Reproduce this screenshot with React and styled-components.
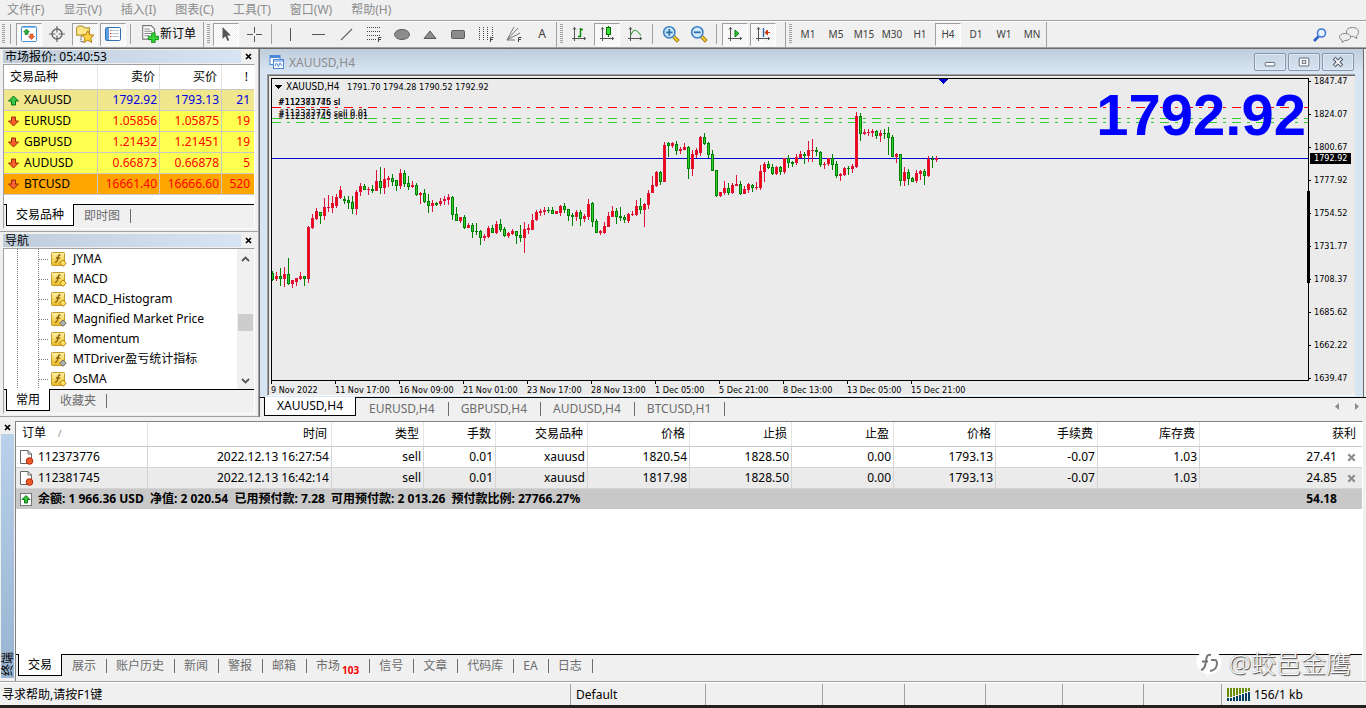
import styled, { createGlobalStyle, css } from "styled-components";

const GlobalStyle = createGlobalStyle`
  * {
    box-sizing: border-box;
  }
  body {
    margin: 0;
    background: #f0f0f0;
    color: #000;
    font-family: "Noto Sans", "Noto Sans CJK SC", sans-serif;
    font-size: 12px;
    line-height: 16px;
  }
  button {
    font: inherit;
    color: inherit;
    background: none;
    border: none;
    padding: 0;
  }
  ul {
    list-style: none;
    margin: 0;
    padding: 0;
  }
`;

const chartFont = css`
  font-family: "DejaVu Sans Condensed", "DejaVu Sans", sans-serif;
  font-size: 9px;
`;

const Container = styled.div`
  min-height: 100vh;
  display: flex;
  flex-direction: column;
`;

/* menu */

const MenuBar = styled.nav`
  display: flex;
  gap: 19px;
  height: 21px;
  padding: 2px 7px;
  border-bottom: 1px solid #a0a0a0;
`;
const MenuItem = styled.button`
  color: #8c8c8c;
  white-space: nowrap;
`;

/* toolbar */

const Toolbar = styled.div`
  display: flex;
  height: 28px;
  border-top: 1px solid #fff;
  border-bottom: 1px solid #696969;
  box-shadow: inset 0 -1px #a0a0a0;
`;
const ToolGroup = styled.div`
  display: flex;
  align-items: center;
  gap: 2px;
  padding: 0 ${(p) => p.$end || 1}px 2px ${(p) => (p.$first ? 2 : 3)}px;
  border-right: 1px solid #a0a0a0;
`;
const Grip = styled.span`
  width: 3px;
  height: 20px;
  margin-right: 1px;
  background: repeating-linear-gradient(#a0a0a0 0 1px, transparent 1px 2px);
`;
const ToolDivider = styled.span`
  width: 1px;
  height: 20px;
  margin: 0 3px 0 2px;
  background: #a0a0a0;
`;
const ToolButton = styled.button`
  display: flex;
  align-items: center;
  justify-content: center;
  gap: 1px;
  width: ${(p) => (p.$wide ? "auto" : "26px")};
  height: 23px;
  padding: ${(p) => (p.$wide ? "0 1px 0 4px" : "0")};
  border: 1px solid transparent;
  color: ${(p) => (p.$wide ? "#000" : "#404040")};
  font-size: ${(p) => (p.$wide || p.$large ? 12 : 10)}px;
  white-space: nowrap;
  ${(p) =>
    p.$active &&
    css`
      border-color: #a0a0a0 #fff #fff #a0a0a0;
      background: repeating-conic-gradient(#fff 0 25%, #f0f0f0 0 50%) 0 0 / 2px
        2px;
    `}
`;
const ToolEnd = styled.div`
  display: flex;
  align-items: center;
  gap: 10px;
  margin-left: auto;
  padding-right: 6px;
`;

/* docked panels */

const Workspace = styled.div`
  display: flex;
`;
const Dock = styled.aside`
  flex: none;
  width: 259px;
  border-right: 1px solid #a0a0a0;
`;
const Panel = styled.section`
  padding: ${(p) => p.$top}px 3px 2px;
  border-bottom: 1px solid #a0a0a0;
`;
const PanelHead = styled.header`
  display: flex;
  align-items: center;
  gap: 1px;
  height: 13px;
  margin-bottom: 1px;
`;
const PanelTitle = styled.h2`
  flex: 1;
  margin: 0;
  padding-left: 2px;
  font-size: 12px;
  font-weight: 400;
  line-height: 13px;
  background: linear-gradient(90deg, #bfcddb, #d7e4f2);
`;
const CloseButton = styled.button`
  display: flex;
  align-items: center;
  justify-content: center;
  width: ${(p) => p.$width || 13}px;
  height: 13px;
`;
const PanelBody = styled.div`
  border: 1px solid;
  border-color: #a0a0a0 #fff #fff #a0a0a0;
`;
const White = styled.div`
  background: #fff;
  padding-bottom: 9px;
`;

const Tabs = styled.div`
  display: flex;
  align-items: flex-start;
  height: ${(p) => p.$height || 24}px;
  padding-left: ${(p) => p.$lead || 2}px;
  border-top: 1px solid #000;
`;
const Tab = styled.button`
  display: flex;
  align-items: center;
  height: 14px;
  margin-top: 4px;
  padding: 0 ${(p) => p.$pad || 10}px 0 ${(p) => (p.$pad || 10) - 1}px;
  border-right: 1px solid #6d6d6d;
  color: #6d6d6d;
  white-space: nowrap;
  ${(p) =>
    p.$active &&
    css`
      height: ${p.$tall || 22}px;
      margin: -1px 1px 0 0;
      padding: 0 ${(p.$pad || 10) - 1}px;
      border: 1px solid #000;
      border-top: none;
      background: #fff;
      color: #000;
    `}
`;
const TabCount = styled.span`
  align-self: flex-end;
  margin: 0 0 -3px 2px;
  color: #f00000;
  font-size: 10px;
  font-weight: 700;
  line-height: 12px;
`;

/* market watch */

const WatchTable = styled.table`
  width: 100%;
  table-layout: fixed;
  border-collapse: separate;
  border-spacing: 0;
`;
const WatchHead = styled.th`
  height: 25px;
  padding: 0 4px 1px 6px;
  border-right: 1px solid #e5e5e5;
  border-bottom: 1px solid #c8c8c8;
  font-weight: 400;
  text-align: ${(p) => (p.$left ? "left" : "right")};
  &:last-child {
    padding-right: 6px;
    border-right: none;
  }
`;
const WatchRow = styled.tr`
  background: ${(p) => p.$bg};
  color: ${(p) => p.$color};
`;
const WatchCell = styled.td`
  height: 21px;
  padding: 0 2px 0 0;
  border-right: 1px solid #c8c8c8;
  border-bottom: 1px solid #c8c8c8;
  text-align: right;
  &:last-child {
    padding-right: 4px;
    border-right: none;
  }
`;
const Symbol = styled.div`
  display: flex;
  align-items: center;
  gap: 5px;
  padding-left: 4px;
  color: #000;
`;

/* navigator */

const TreeBox = styled.div`
  display: flex;
  background: #fff;
`;
const Tree = styled.ul`
  flex: 1;
`;
const TreeItem = styled.li`
  display: flex;
  align-items: center;
  height: 20px;
  padding-left: 13px;
  line-height: 18px;
  white-space: nowrap;
`;
const TreeLine = styled.span`
  width: ${(p) => p.$width}px;
  height: 20px;
  background: repeating-linear-gradient(#808080 0 1px, transparent 1px 2px) 0 0 /
    1px 100% no-repeat;
`;
const TreeDash = styled.span`
  width: 10px;
  height: 1px;
  margin-right: 2px;
  background: repeating-linear-gradient(
    90deg,
    #808080 0 1px,
    transparent 1px 2px
  );
`;
const TreeName = styled.span`
  margin-left: 6px;
`;
const ScrollBar = styled.div`
  display: flex;
  flex-direction: column;
  align-items: center;
  justify-content: space-between;
  width: 17px;
  padding: 7px 1px 5px 0;
  background: #f0f0f0;
`;
const Thumb = styled.span`
  width: 15px;
  height: 17px;
  margin-top: 4px;
  background: #cdcdcd;
`;

/* chart window */

const Mdi = styled.main`
  flex: 1;
  min-width: 0;
  display: flex;
  flex-direction: column;
  border-left: 1px solid #696969;
`;
const ChartWindow = styled.section`
  margin-right: 2px;
  padding: 0 8px 1px 7px;
  border-right: 1px solid #696969;
  background: linear-gradient(#bfcddb, #d7e4f2 22px);
`;
const WindowHead = styled.header`
  display: flex;
  align-items: center;
  gap: 2px;
  height: 25px;
  padding: 0 1px 0 2px;
`;
const WindowTitle = styled.h1`
  flex: 1;
  margin: 2px 0 0 2px;
  color: #8c8c8c;
  font-size: 12px;
  font-weight: 400;
  line-height: 16px;
`;
const WindowButton = styled.button`
  display: flex;
  align-items: center;
  justify-content: center;
  width: 32px;
  height: 18px;
  border: 1px solid #8593ad;
  border-radius: 2px;
  background: linear-gradient(#c9d6e4, #d5e2f0);
  box-shadow: inset 0 0 0 1px #e2ebf5;
`;
const ChartFrame = styled.div`
  border-top: 1px solid #a0a0a0;
  border-left: 1px solid #a0a0a0;
  border-bottom: 1px solid #fff;
  box-shadow: inset 1px 1px #696969;
  background: #ebebeb;
  padding: 3px 0 0 3px;
`;
const ChartRow = styled.div`
  display: flex;
`;
const Plot = styled.svg`
  flex: 1;
  min-width: 0;
  height: 303px;
  border: 1px solid #000;
  display: block;
`;
const PlotText = styled.text`
  ${chartFont}
`;
const PlotName = styled(PlotText)`
  font-size: 10px;
`;
const BigPrice = styled.text`
  font-family: "Liberation Sans", Arial, sans-serif;
  font-size: 58px;
  font-weight: 700;
  fill: #0000ff;
  text-anchor: end;
`;
const PriceAxis = styled.div`
  ${chartFont}
  position: relative;
  display: flex;
  flex-direction: column;
  gap: 23px;
  width: 46px;
  margin: -2px 0;
  line-height: 10px;
`;
const PriceLabel = styled.span`
  display: flex;
  align-items: center;
  gap: 3px;
  &::before {
    content: "";
    width: 2px;
    height: 1px;
    background: #000;
  }
`;
const PriceNow = styled.span`
  position: absolute;
  top: 77px;
  left: 1px;
  width: 41px;
  padding-left: 4px;
  line-height: 11px;
  background: #000;
  color: #fff;
`;
const RangeMark = styled.span`
  position: absolute;
  top: 115px;
  left: -2px;
  width: 3px;
  height: 92px;
  background: #000;
`;
const TimeAxis = styled.div`
  ${chartFont}
  display: flex;
  height: 14px;
  line-height: 12px;
  overflow: hidden;
`;
const TimeLabel = styled.span`
  flex: none;
  width: 64px;
  padding-top: 3px;
  white-space: nowrap;
  background: linear-gradient(#000, #000) 0 0 / 1px 3px no-repeat;
`;
const TabSpacer = styled.span`
  flex: 1;
`;
const Arrow = styled.button`
  display: flex;
  width: 19px;
  height: 16px;
  align-items: center;
  justify-content: center;
`;

/* terminal */

const Terminal = styled.section`
  flex: 1;
  display: flex;
  margin-top: 4px;
`;
const Strip = styled.div`
  display: flex;
  flex-direction: column;
  width: 15px;
  padding: 0 1px 3px 1px;
`;
const StripTitle = styled.div`
  flex: 1;
  display: flex;
  align-items: flex-start;
  padding-top: 2px;
  background: linear-gradient(#98b4d1, #b9d1ea);
  line-height: 13px;
  writing-mode: vertical-rl;
  text-orientation: sideways;
  transform: rotate(180deg);
`;
const TerminalBody = styled.div`
  flex: 1;
  min-width: 0;
  display: flex;
  flex-direction: column;
  margin-right: 3px;
  border-top: 1px solid #828282;
  border-left: 1px solid #828282;
  border-right: 1px solid #fff;
`;
const TerminalSheet = styled.div`
  flex: 1;
  background: #fff;
`;
const OrderTable = styled.table`
  width: 100%;
  table-layout: fixed;
  border-collapse: separate;
  border-spacing: 0;
`;
const OrderHead = styled.th`
  height: 25px;
  padding: 0 4px 1px 6px;
  border-right: 1px solid #e5e5e5;
  border-bottom: 1px solid #c8c8c8;
  font-weight: 400;
  text-align: right;
  &:first-child {
    text-align: left;
  }
  &:last-child {
    padding-right: 6px;
    border-right: none;
  }
`;
const SortMark = styled.span`
  margin-left: 12px;
  color: #808080;
  font-size: 9px;
`;
const OrderRow = styled.tr`
  background: ${(p) => (p.$alt ? "#ebebeb" : "#fff")};
`;
const OrderCell = styled.td`
  height: 21px;
  padding: 0 2px 0 3px;
  border-right: 1px solid #d4d4d4;
  border-bottom: 1px solid #d4d4d4;
  text-align: right;
  &:last-child {
    padding-right: 6px;
    border-right: none;
  }
`;
const Inline = styled.div`
  display: flex;
  align-items: center;
  justify-content: ${(p) => (p.$end ? "flex-end" : "flex-start")};
  gap: ${(p) => (p.$end ? 9 : 4)}px;
`;
const TotalRow = styled.tr`
  height: 20px;
  background: #c8c8c8;
  font-weight: 700;
`;
const TotalCell = styled.td`
  padding: 0 25px 0 3px;
  white-space: pre;
  text-align: ${(p) => (p.$end ? "right" : "left")};
`;

/* status bar */

const StatusBar = styled.footer`
  display: flex;
  height: 27px;
  padding-top: 2px;
  border-top: 1px solid #a0a0a0;
  border-bottom: 3px solid #23211f;
  box-shadow: inset 0 1px #fff;
`;
const StatusCell = styled.div`
  display: flex;
  align-items: center;
  gap: 4px;
  width: ${(p) => p.$width}px;
  flex: ${(p) => (p.$grow ? 1 : "none")};
  padding-left: ${(p) => (p.$grow ? 2 : 5)}px;
  border-left: ${(p) => (p.$grow ? "none" : "1px solid #a0a0a0")};
`;
const Watermark = styled.div`
  position: absolute;
  right: 15px;
  bottom: 29px;
  display: flex;
  align-items: center;
  gap: 6px;
  color: #fff;
  font-size: 25px;
  font-weight: 300;
  line-height: 32px;
  text-shadow: 1px 1px 1px #444, 0 0 1px #888;
`;

/* icons */

const Icon = ({ size = 16, children, ...rest }) => (
  <svg width={size} height={size} viewBox="0 0 16 16" fill="none" {...rest}>
    {children}
  </svg>
);

const Cross = ({ color = "#000", size = 7 }) => (
  <svg width={size} height={size} viewBox="0 0 7 7">
    <path d="M1 1l5 5M6 1L1 6" stroke={color} strokeWidth="1.7" />
  </svg>
);

const ArrowIcon = ({ up }) => (
  <svg width="11" height="11" viewBox="0 0 11 11">
    <path
      d={
        up
          ? "M5.5 1L10.5 6H7.5V10H3.5V6H.5Z"
          : "M5.5 10L.5 5H3.5V1H7.5V5H10.5Z"
      }
      fill={up ? "#35c945" : "#f8602c"}
      stroke={up ? "#0c6f1b" : "#96290a"}
    />
  </svg>
);

const FnIcon = ({ gray }) => (
  <svg width="16" height="16" viewBox="0 0 16 16">
    <defs>
      <linearGradient id="fn" x2="0" y2="1">
        <stop offset="0" stopColor="#fff3a8" />
        <stop offset="1" stopColor="#e6b822" />
      </linearGradient>
    </defs>
    <rect x=".5" y="1.5" width="13" height="13" rx="1" fill="url(#fn)" stroke="#c39a2b" />
    <path
      d="M9.5 4.2C7.7 3.5 7.2 5 7 6.5C6.7 9 6.5 11.5 4 11.3M5 7H9"
      fill="none"
      stroke="#8a5f0a"
      strokeWidth="1.3"
    />
    <path
      d="M12 9L15.2 12.2L12 15.4L8.8 12.2Z"
      fill={gray ? "#b0b0b0" : "#ffe169"}
      stroke={gray ? "#6c6c6c" : "#b98507"}
    />
  </svg>
);

const OrderIcon = () => (
  <svg width="15" height="16" viewBox="0 0 15 16">
    <path d="M1.5 1.5H9L12.5 5V14.5H1.5Z" fill="#fff" stroke="#666" />
    <path d="M9 1.5V5H12.5" fill="none" stroke="#666" />
    <circle cx="10.5" cy="12" r="3.3" fill="#f05a28" stroke="#b02a0a" />
  </svg>
);

const BalanceIcon = () => (
  <svg width="15" height="15" viewBox="0 0 15 15">
    <rect x="1.5" y="1.5" width="11" height="12" fill="#fff" stroke="#777" />
    <path d="M7 3.5L11 7.5H8.5V11H5.5V7.5H3Z" fill="#35c435" stroke="#0f7a1c" />
  </svg>
);

const Axes = ({ children }) => (
  <Icon>
    <path d="M3.5 1V15M1 12.5H15M2 3.5L3.5 1.5L5 3.5M12.8 11L14.8 12.5L12.8 14" stroke="#555" />
    {children}
  </Icon>
);

const Magnifier = ({ plus }) => (
  <Icon size={18}>
    <path d="M10.5 10.5L14.5 14.5" stroke="#a77a10" strokeWidth="3.4" />
    <path d="M10.5 10.5L14 14" stroke="#f3cf35" strokeWidth="1.6" />
    <circle cx="6.5" cy="6.5" r="5" fill="#cfeaff" stroke="#3c7fc4" strokeWidth="1.4" />
    <path d={plus ? "M3.5 6.5H9.5M6.5 3.5V9.5" : "M3.5 6.5H9.5"} stroke="#2c70a8" strokeWidth="1.6" />
  </Icon>
);

const icons = {
  watch: (
    <Icon>
      <rect x=".5" y=".5" width="15" height="15" rx="1" fill="#fff" stroke="#4a90d9" />
      <path d="M1 1.5H15" stroke="#8fc0f0" />
      <path d="M5.5 3L8.5 6H7V8.5H4V6H2.5Z" fill="#2fae3a" stroke="#17762a" strokeWidth=".6" />
      <path d="M10.5 13.5L7.5 10.5H9V8H12V10.5H13.5Z" fill="#f26a35" stroke="#b73a12" strokeWidth=".6" />
    </Icon>
  ),
  target: (
    <Icon>
      <circle cx="8" cy="8" r="5" stroke="#666" strokeWidth="1.4" />
      <path d="M8 0V6.5M8 9.5V16M0 8H6.5M9.5 8H16" stroke="#666" strokeWidth="1.2" />
    </Icon>
  ),
  favorites: (
    <Icon size={18}>
      <path d="M.5 2.5L2 1H6L7.5 2.5H12V9H.5Z" fill="#ffe88a" stroke="#b9973a" />
      <path d="M4.5 10V15H7" stroke="#444" strokeDasharray="1 1" />
      <path
        d="M10.5 5L12.2 8.6L16 9L13.2 11.6L14 15.5L10.5 13.6L7 15.5L7.8 11.6L5 9L8.8 8.6Z"
        fill="#ffcf3f"
        stroke="#a97610"
        strokeWidth=".8"
      />
    </Icon>
  ),
  terminal: (
    <Icon>
      <rect x=".5" y="1.5" width="15" height="13" rx="1" fill="#fff" stroke="#2f6fb5" />
      <rect x="1" y="2" width="3" height="12" fill="#5d9ee0" />
      <path d="M6 4.5H14M6 7.5H14M6 10.5H14" stroke="#b9c4d0" />
      <path d="M5 4.5h1M5 7.5h1M5 10.5h1" stroke="#d22" />
    </Icon>
  ),
  order: (
    <Icon size={18}>
      <path d="M1.5.5H9L12 3.5V12.5H1.5Z" fill="#fff" stroke="#777" />
      <path d="M3 3.5H8M3 5.5H10M3 7.5H10M3 9.5H7" stroke="#888" />
      <path d="M9.5 7h3v3h3v3h-3v3h-3v-3h-3v-3h3Z" fill="#35d435" stroke="#0d8a1c" strokeWidth=".8" />
    </Icon>
  ),
  cursor: (
    <Icon>
      <path d="M4.5 1V13L7.3 10.3L9.5 15L11.3 14.2L9.2 9.6H13Z" fill="#555" />
    </Icon>
  ),
  crosshair: (
    <Icon>
      <path d="M8.5 1V7M8.5 10V16M1 8.5H7M10 8.5H16" stroke="#555" />
    </Icon>
  ),
  vline: (
    <Icon>
      <path d="M8.5 2V15" stroke="#555" />
    </Icon>
  ),
  hline: (
    <Icon>
      <path d="M2 8.5H15" stroke="#555" />
    </Icon>
  ),
  trend: (
    <Icon>
      <path d="M3 14L14 3" stroke="#666" strokeWidth="1.2" />
    </Icon>
  ),
  fibo: (
    <Icon>
      <path d="M1 1.5H15M1 5.5H15M1 9.5H15M1 13.5H10" stroke="#444" strokeDasharray="1 1" />
      <path d="M12.5 16V11.5H15.5M12.5 13.5H15" stroke="#444" />
    </Icon>
  ),
  ellipse: (
    <Icon>
      <ellipse cx="8" cy="8.5" rx="7.5" ry="5" fill="#8c8c8c" stroke="#5a5a5a" />
    </Icon>
  ),
  triangle: (
    <Icon>
      <path d="M8 5L14 12.5H2Z" fill="#8c8c8c" stroke="#5a5a5a" />
    </Icon>
  ),
  rect: (
    <Icon>
      <rect x="1.5" y="4.5" width="13" height="8" rx="1" fill="#8c8c8c" stroke="#5a5a5a" />
    </Icon>
  ),
  cycles: (
    <Icon>
      <path d="M1.5 1V15M5.5 1V15M9.5 1V15M14.5 1V10" stroke="#444" strokeDasharray="1 1" />
      <path d="M12.5 16V11.5H15.5M12.5 13.5H15" stroke="#444" />
    </Icon>
  ),
  fan: (
    <Icon>
      <path d="M1 14L8 1M1 14L12 2M1 14L14 7M1 14H9" stroke="#777" />
      <path d="M12.5 16V11.5H15.5M12.5 13.5H15" stroke="#444" />
    </Icon>
  ),
  bars: (
    <Axes>
      <path d="M9.5 2V11M9.5 3.5H12M7 10.5H9.5" stroke="#008a00" strokeWidth="1.4" />
    </Axes>
  ),
  candles: (
    <Axes>
      <path d="M9.5 0V11" stroke="#007000" />
      <rect x="7.5" y="1.5" width="4" height="7" fill="#3bdc3b" stroke="#007000" />
    </Axes>
  ),
  line: (
    <Axes>
      <path d="M3.5 9.5C7 2 9 3 14 9.5" stroke="#3a9d3a" strokeWidth="1.2" />
    </Axes>
  ),
  scroll: (
    <Axes>
      <path d="M8 4L12 7.5L8 11Z" fill="#2fc42f" stroke="#007d10" />
    </Axes>
  ),
  shift: (
    <Axes>
      <path d="M8.5 2V11" stroke="#2468a8" strokeWidth="1.4" />
      <path d="M15 6.5H11M12.5 4L10 6.5L12.5 9Z" fill="#c43a10" stroke="#c43a10" />
    </Axes>
  ),
};

const tools = {
  view: ["watch", "target", "favorites", "terminal"],
  draw: ["vline", "hline", "trend", "fibo", "ellipse", "triangle", "rect", "cycles", "fan"],
  type: ["bars", "candles", "line"],
};
const pressed = ["watch", "favorites", "terminal", "cursor", "candles", "scroll", "shift"];

const Tool = ({ name }) => (
  <ToolButton $active={pressed.includes(name)} aria-label={name}>
    {icons[name]}
  </ToolButton>
);

/* data */

const menu = ["文件(F)", "显示(V)", "插入(I)", "图表(C)", "工具(T)", "窗口(W)", "帮助(H)"];
const periods = ["M1", "M5", "M15", "M30", "H1", "H4", "D1", "W1", "MN"];

const quotes = [
  { symbol: "XAUUSD", bid: "1792.92", ask: "1793.13", spread: 21, up: true, bg: "#f0e68c", color: "#0000e0" },
  { symbol: "EURUSD", bid: "1.05856", ask: "1.05875", spread: 19, bg: "#ffff50", color: "#ff0000" },
  { symbol: "GBPUSD", bid: "1.21432", ask: "1.21451", spread: 19, bg: "#ffff50", color: "#ff0000" },
  { symbol: "AUDUSD", bid: "0.66873", ask: "0.66878", spread: 5, bg: "#ffff50", color: "#ff0000" },
  { symbol: "BTCUSD", bid: "16661.40", ask: "16666.60", spread: 520, bg: "#ffa500", color: "#ff0000" },
];

const indicators = [
  { name: "JYMA" },
  { name: "MACD" },
  { name: "MACD_Histogram" },
  { name: "Magnified Market Price", gray: true },
  { name: "Momentum" },
  { name: "MTDriver盈亏统计指标", gray: true },
  { name: "OsMA" },
];

const prices = ["1847.47", "1824.07", "1800.67", "1777.92", "1754.52", "1731.77", "1708.37", "1685.62", "1662.22", "1639.47"];
const times = [
  "9 Nov 2022",
  "11 Nov 17:00",
  "16 Nov 09:00",
  "21 Nov 01:00",
  "23 Nov 17:00",
  "28 Nov 13:00",
  "1 Dec 05:00",
  "5 Dec 21:00",
  "8 Dec 13:00",
  "13 Dec 05:00",
  "15 Dec 21:00",
];

// high, body top, body bottom, low (px from the top of the plot), r = rise, g = fall
const candles = `
192 194 201 202 g,193 197 200 202 r,189 197 200 207 g,188 195 200 208 r,179 195 205 206 g,201 201 205 209 r,
199 199 203 207 r,193 197 200 201 r,197 197 200 207 g,147 148 200 204 r,135 139 149 150 r,129 132 140 141 r,
133 133 137 145 g,119 128 137 141 r,116 128 129 133 r,117 124 129 134 r,115 118 127 129 r,107 111 119 120 r,
117 120 122 125 g,117 121 124 130 g,117 123 130 135 g,111 113 130 136 r,104 107 113 117 r,105 107 111 111 g,
108 110 111 116 r,106 110 112 114 g,91 102 112 112 r,88 102 109 115 g,89 100 109 115 r,97 99 101 108 r,
95 99 103 107 g,101 101 107 112 g,90 94 107 110 r,91 94 105 108 g,97 104 108 111 g,102 106 108 109 r,
104 106 116 117 g,113 114 116 125 r,110 114 123 124 g,115 122 127 134 g,121 124 127 133 r,123 124 126 127 g,
119 122 125 127 r,117 120 122 126 r,115 118 121 126 r,117 118 136 141 g,128 135 142 142 g,138 138 142 144 r,
136 138 149 150 g,144 146 149 149 r,144 146 153 159 g,144 152 153 156 g,151 152 159 166 g,155 157 159 162 r,
147 149 158 159 r,146 149 154 154 g,142 145 154 155 r,140 145 151 153 g,148 150 157 158 g,153 154 157 159 r,
150 152 155 156 r,152 152 157 165 g,146 156 159 163 g,143 150 159 174 r,145 149 151 155 r,135 141 151 151 r,
131 133 141 142 r,130 132 134 137 r,128 131 133 136 r,128 131 132 134 g,128 131 135 135 g,132 132 135 135 r,
126 127 134 137 r,124 127 131 134 g,130 130 137 142 g,134 136 138 147 g,131 133 138 142 r,131 133 140 147 g,
135 137 140 143 r,120 125 138 141 r,123 124 143 148 g,140 142 154 154 g,151 152 154 156 r,143 147 154 155 r,
133 137 148 148 r,127 132 138 138 r,129 132 138 145 g,128 137 139 142 g,136 138 141 144 g,134 135 142 144 r,
132 135 136 137 r,121 127 136 137 r,119 127 131 135 g,124 125 131 148 r,111 114 126 130 r,97 106 114 114 r,
92 93 107 108 r,92 93 103 106 g,63 66 103 103 r,63 64 67 78 g,63 64 67 69 r,62 65 72 76 g,
68 70 72 75 r,64 68 71 71 r,67 68 90 100 g,71 75 90 97 r,69 71 76 79 r,57 58 74 77 r,
54 58 65 66 g,63 64 76 79 g,71 75 92 92 g,91 91 117 118 g,113 113 117 118 r,102 109 114 116 r,
104 109 114 116 g,104 106 114 115 r,96 105 107 107 r,102 105 115 116 g,107 110 115 115 r,104 105 111 114 r,
105 106 109 113 g,103 108 109 111 r,86 92 109 111 r,83 85 93 103 r,82 85 89 90 g,85 88 95 96 g,
87 88 95 96 r,87 88 93 96 g,79 79 93 95 r,76 79 84 89 g,82 83 85 88 g,75 78 84 86 r,
72 75 79 79 r,73 75 77 85 g,62 71 77 83 r,60 71 72 83 r,68 71 73 77 g,72 73 86 88 g,
83 85 86 90 r,79 79 85 87 r,75 79 86 91 g,82 85 97 99 g,94 95 97 102 r,88 89 96 97 r,
87 89 90 96 g,85 87 90 94 r,33 37 88 89 r,34 37 55 62 g,50 53 55 56 r,50 53 54 57 r,
50 52 54 58 r,51 52 57 60 g,51 54 57 63 r,50 54 55 60 g,48 54 59 76 g,56 58 78 78 g,
74 75 78 84 r,75 75 102 107 g,88 93 102 107 r,90 93 100 106 g,98 99 103 103 g,91 94 102 104 r,
91 92 95 101 r,90 92 97 106 g,77 80 97 98 r,77 80 81 89 g,77 79 81 83 r
`
  .trim()
  .split(",")
  .map((c) => {
    const [high, top, bottom, low, dir] = c.trim().split(" ");
    return { high: +high, top: +top, bottom: +bottom, low: +low, rise: dir === "r" };
  });

const levels = [
  { y: 28, color: "#ff0000" },
  { y: 39, color: "#32cd32" },
  { y: 43, color: "#32cd32" },
];

const chartTabs = ["XAUUSD,H4", "EURUSD,H4", "GBPUSD,H4", "AUDUSD,H4", "BTCUSD,H1"];

const columns = ["时间", "类型", "手数", "交易品种", "价格", "止损", "止盈", "价格", "手续费", "库存费", "获利"];
const widths = [132, 184, 92, 72, 92, 102, 102, 102, 102, 102, 102];
const orders = [
  {
    id: "112373776",
    cells: ["2022.12.13 16:27:54", "sell", "0.01", "xauusd", "1820.54", "1828.50", "0.00", "1793.13", "-0.07", "1.03"],
    profit: "27.41",
  },
  {
    id: "112381745",
    cells: ["2022.12.13 16:42:14", "sell", "0.01", "xauusd", "1817.98", "1828.50", "0.00", "1793.13", "-0.07", "1.03"],
    profit: "24.85",
  },
];
const total =
  "余额: 1 966.36 USD  净值: 2 020.54  已用预付款: 7.28  可用预付款: 2 013.26  预付款比例: 27766.27%";

const terminalTabs = ["交易", "展示", "账户历史", "新闻", "警报", "邮箱", "市场", "信号", "文章", "代码库", "EA", "日志"];

const Candle = ({ x, high, top, bottom, low, rise }) => {
  const edge = rise ? "#dc143c" : "#008000";
  const h = Math.max(bottom - top, 1);
  return (
    <g>
      <rect x={x} y={high} width="1" height={Math.max(low - high, 1)} fill={edge} />
      <rect x={x - 1} y={top} width="3" height={h} fill={edge} />
      {h > 2 && <rect x={x} y={top + 1} width="1" height={h - 2} fill={rise ? "#ff0000" : "#32cd32"} />}
    </g>
  );
};

const Chart = () => (
  <Plot shapeRendering="crispEdges">
    {levels.map((l) => (
      <line key={l.y} x1="0" x2="100%" y1={l.y + 0.5} y2={l.y + 0.5} stroke={l.color} strokeDasharray="9 6 3 6" />
    ))}
    <line x1="0" x2="100%" y1="79.5" y2="79.5" stroke="#0000cd" />
    {candles.map((c, i) => (
      <Candle key={i} x={i * 4} {...c} />
    ))}
    <path d="M667 0H676L671.5 5Z" fill="#0000cd" />
    <path d="M3 6H10L6.5 10Z" />
    <PlotName x="14" y="11">
      XAUUSD,H4
    </PlotName>
    <PlotText x="75" y="11">
      1791.70 1794.28 1790.52 1792.92
    </PlotText>
    <PlotText x="6" y="26">#112373776 sl</PlotText>
    <PlotText x="6" y="26">#112381745 sl</PlotText>
    <PlotText x="6" y="37">#112373776 sell 0.01</PlotText>
    <PlotText x="6" y="40">#112381745 sell 0.01</PlotText>
    <BigPrice x="100%" dx="-2" y="56">
      1792.92
    </BigPrice>
  </Plot>
);

const MarketWatch = () => (
  <Panel $top={1}>
    <PanelHead>
      <PanelTitle>市场报价: 05:40:53</PanelTitle>
      <CloseButton aria-label="关闭">
        <Cross />
      </CloseButton>
    </PanelHead>
    <PanelBody>
      <White>
        <WatchTable>
          <colgroup>
            <col width="94" />
            <col width="62" />
            <col width="62" />
            <col />
          </colgroup>
          <thead>
            <tr>
              <WatchHead $left>交易品种</WatchHead>
              <WatchHead>卖价</WatchHead>
              <WatchHead>买价</WatchHead>
              <WatchHead>!</WatchHead>
            </tr>
          </thead>
          <tbody>
            {quotes.map((q) => (
              <WatchRow key={q.symbol} $bg={q.bg} $color={q.color}>
                <WatchCell>
                  <Symbol>
                    <ArrowIcon up={q.up} />
                    {q.symbol}
                  </Symbol>
                </WatchCell>
                <WatchCell>{q.bid}</WatchCell>
                <WatchCell>{q.ask}</WatchCell>
                <WatchCell>{q.spread}</WatchCell>
              </WatchRow>
            ))}
          </tbody>
        </WatchTable>
      </White>
      <Tabs>
        <Tab $active>交易品种</Tab>
        <Tab>即时图</Tab>
      </Tabs>
    </PanelBody>
  </Panel>
);

const Navigator = () => (
  <Panel $top={2}>
    <PanelHead>
      <PanelTitle>导航</PanelTitle>
      <CloseButton aria-label="关闭">
        <Cross />
      </CloseButton>
    </PanelHead>
    <PanelBody>
      <TreeBox>
        <Tree>
          {indicators.map((item) => (
            <TreeItem key={item.name}>
              <TreeLine $width={21} />
              <TreeLine $width={1} />
              <TreeDash />
              <FnIcon gray={item.gray} />
              <TreeName>{item.name}</TreeName>
            </TreeItem>
          ))}
        </Tree>
        <ScrollBar>
          <svg width="9" height="6">
            <path d="M1 5L4.5 1.5L8 5" fill="none" stroke="#555" strokeWidth="1.8" />
          </svg>
          <Thumb />
          <svg width="9" height="6">
            <path d="M1 1L4.5 4.5L8 1" fill="none" stroke="#555" strokeWidth="1.8" />
          </svg>
        </ScrollBar>
      </TreeBox>
      <Tabs>
        <Tab $active>常用</Tab>
        <Tab>收藏夹</Tab>
      </Tabs>
    </PanelBody>
  </Panel>
);

const ChartArea = () => (
  <Mdi>
    <ChartWindow>
      <WindowHead>
        <Icon>
          <rect x="1" y="1.5" width="10" height="9" fill="#fff" stroke="#4a86d8" />
          <path d="M1 3H11" stroke="#4a86d8" strokeWidth="2" />
          <rect x="4.5" y="5.5" width="10" height="9" fill="#fff" stroke="#4a86d8" />
          <path d="M4.5 7H14.5" stroke="#4a86d8" />
          <path d="M6 12L7.5 9L9.5 12.5L11 9L13 12" stroke="#4a86d8" />
        </Icon>
        <WindowTitle>XAUUSD,H4</WindowTitle>
        <WindowButton aria-label="最小化">
          <Icon size={14}>
            <rect x="2.5" y="8.5" width="11" height="4" rx="1" fill="#fff" stroke="#50566a" />
          </Icon>
        </WindowButton>
        <WindowButton aria-label="最大化">
          <Icon size={14}>
            <rect x="2.5" y="3.5" width="11" height="9" rx="1" fill="#fff" stroke="#50566a" />
            <rect x="6" y="6.5" width="4" height="3" fill="#fff" stroke="#50566a" />
          </Icon>
        </WindowButton>
        <WindowButton aria-label="关闭">
          <Icon size={14}>
            <path d="M3.5 3.5L12.5 12.5M12.5 3.5L3.5 12.5" stroke="#50566a" strokeWidth="4.4" />
            <path d="M4.2 4.2L11.8 11.8M11.8 4.2L4.2 11.8" stroke="#fff" strokeWidth="2" />
          </Icon>
        </WindowButton>
      </WindowHead>
      <ChartFrame>
        <ChartRow>
          <Chart />
          <PriceAxis>
            {prices.map((p) => (
              <PriceLabel key={p}>{p}</PriceLabel>
            ))}
            <PriceNow>1792.92</PriceNow>
            <RangeMark />
          </PriceAxis>
        </ChartRow>
        <TimeAxis>
          {times.map((t) => (
            <TimeLabel key={t}>{t}</TimeLabel>
          ))}
        </TimeAxis>
      </ChartFrame>
    </ChartWindow>
    <Tabs $height={20} $lead={4}>
      {chartTabs.map((name, i) => (
        <Tab key={name} $active={i === 0} $pad={13} $tall={19}>
          {name}
        </Tab>
      ))}
      <TabSpacer />
      <Arrow aria-label="向左">
        <svg width="5" height="7">
          <path d="M4 0V7L0 3.5Z" fill="#8c8c8c" />
        </svg>
      </Arrow>
      <Arrow aria-label="向右">
        <svg width="5" height="7">
          <path d="M1 0V7L5 3.5Z" fill="#8c8c8c" />
        </svg>
      </Arrow>
    </Tabs>
  </Mdi>
);

const Orders = () => (
  <OrderTable>
    <colgroup>
      {widths.map((w, i) => (
        <col key={i} width={w} />
      ))}
      <col />
    </colgroup>
    <thead>
      <tr>
        <OrderHead>
          订单<SortMark>/</SortMark>
        </OrderHead>
        {columns.map((c, i) => (
          <OrderHead key={i}>{c}</OrderHead>
        ))}
      </tr>
    </thead>
    <tbody>
      {orders.map((o, i) => (
        <OrderRow key={o.id} $alt={i % 2 === 1}>
          <OrderCell>
            <Inline>
              <OrderIcon />
              {o.id}
            </Inline>
          </OrderCell>
          {o.cells.map((c, j) => (
            <OrderCell key={j}>{c}</OrderCell>
          ))}
          <OrderCell>
            <Inline $end>
              {o.profit}
              <CloseButton $width={10} aria-label="平仓">
                <Cross color="#8c8c8c" size={9} />
              </CloseButton>
            </Inline>
          </OrderCell>
        </OrderRow>
      ))}
      <TotalRow>
        <TotalCell colSpan={11}>
          <Inline>
            <BalanceIcon />
            {total}
          </Inline>
        </TotalCell>
        <TotalCell $end>54.18</TotalCell>
      </TotalRow>
    </tbody>
  </OrderTable>
);

const TrafficIcon = () => (
  <svg width="23" height="13" shapeRendering="crispEdges">
    {[3, 3, 4, 5, 6, 7, 8, 9].map((h, i) => (
      <g key={i}>
        <rect x={i * 3} y="0" width="2" height={12 - h} fill="#6b8e00" />
        <rect x={i * 3} y={13 - h} width="2" height={h} fill="#003f5f" />
      </g>
    ))}
  </svg>
);

const App = () => {
  return (
    <Container>
      <GlobalStyle />
      <MenuBar>
        {menu.map((m) => (
          <MenuItem key={m}>{m}</MenuItem>
        ))}
      </MenuBar>
      <Toolbar>
        <ToolGroup $first $end={5}>
          <Grip />
          <ToolDivider />
          {tools.view.map((t) => (
            <Tool key={t} name={t} />
          ))}
          <ToolDivider />
          <ToolButton $wide>
            {icons.order}
            新订单
          </ToolButton>
        </ToolGroup>
        <ToolGroup>
          <Grip />
          <Tool name="cursor" />
          <Tool name="crosshair" />
          <ToolDivider />
          {tools.draw.map((t) => (
            <Tool key={t} name={t} />
          ))}
          <ToolButton $large>A</ToolButton>
        </ToolGroup>
        <ToolGroup $end={9}>
          <Grip />
          {tools.type.map((t) => (
            <Tool key={t} name={t} />
          ))}
          <ToolDivider />
          <ToolButton aria-label="放大">
            <Magnifier plus />
          </ToolButton>
          <ToolButton aria-label="缩小">
            <Magnifier />
          </ToolButton>
          <ToolDivider />
          <Tool name="scroll" />
          <Tool name="shift" />
        </ToolGroup>
        <ToolGroup>
          <Grip />
          {periods.map((p) => (
            <ToolButton key={p} $active={p === "H4"}>
              {p}
            </ToolButton>
          ))}
        </ToolGroup>
        <ToolEnd>
          <Icon>
            <path d="M6.5 9.5L2 14" stroke="#2d62c4" strokeWidth="2.6" />
            <circle cx="9.5" cy="6" r="4" fill="#e8f2ff" stroke="#3d78dc" strokeWidth="1.6" />
          </Icon>
          <svg width="22" height="18" viewBox="0 0 22 18" fill="#eee" stroke="#888">
            <path d="M14.5 1.5C18.5 1.5 20.5 3.3 20.5 6C20.5 7.6 19.8 8.9 18.5 9.7L19 12.5L15.5 10.5C11 10.7 8.5 9 8.5 6C8.5 3.3 10.5 1.5 14.5 1.5Z" />
            <path d="M7 7.5C10.5 7.5 12.5 9 12.5 11C12.5 13 10.5 14.5 7 14.5L4 16.5V14C2.3 13.3 1.5 12.3 1.5 11C1.5 9 3.5 7.5 7 7.5Z" />
          </svg>
        </ToolEnd>
      </Toolbar>
      <Workspace>
        <Dock>
          <MarketWatch />
          <Navigator />
        </Dock>
        <ChartArea />
      </Workspace>
      <Terminal>
        <Strip>
          <CloseButton $width={12} aria-label="关闭">
            <Cross />
          </CloseButton>
          <StripTitle>终端</StripTitle>
        </Strip>
        <TerminalBody>
          <TerminalSheet>
            <Orders />
          </TerminalSheet>
          <Tabs $height={27}>
            {terminalTabs.map((name, i) => (
              <Tab key={name} $active={i === 0}>
                {name}
                {name === "市场" && <TabCount>103</TabCount>}
              </Tab>
            ))}
          </Tabs>
        </TerminalBody>
      </Terminal>
      <StatusBar>
        <StatusCell $grow>寻求帮助,请按F1键</StatusCell>
        <StatusCell $width={135}>Default</StatusCell>
        <StatusCell $width={117} />
        <StatusCell $width={82} />
        <StatusCell $width={81} />
        <StatusCell $width={77} />
        <StatusCell $width={81} />
        <StatusCell $width={78} />
        <StatusCell $width={145}>
          <TrafficIcon />
          156/1 kb
        </StatusCell>
      </StatusBar>
      <Watermark>
        <svg width="27" height="30" viewBox="0 0 27 30">
          <path
            d="M13.5 2A12 12 0 0 1 13.5 26L11 29.5L11.5 26A12 12 0 0 1 13.5 2Z"
            fill="#fff"
          />
          <path
            d="M15 7C10.5 6 10.5 10 10 13C9.5 17 9 21 5 22M6 13.5H12M15 12H19C22 12 22.5 22 14 23"
            fill="none"
            stroke="#777"
            strokeWidth="2"
          />
        </svg>
        @蛟邑金鹰
      </Watermark>
    </Container>
  );
};

export default App;
